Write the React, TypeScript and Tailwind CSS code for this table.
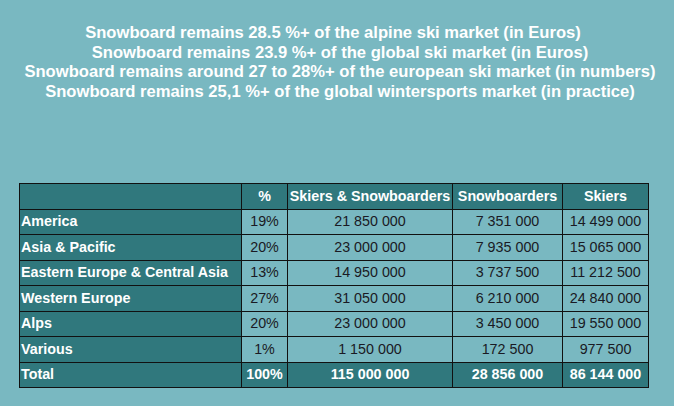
const lines = [
  "Snowboard remains 28.5 %+ of the alpine ski market (in Euros)",
  "Snowboard remains 23.9 %+ of the global ski market (in Euros)",
  "Snowboard remains around 27 to 28%+ of the european ski market (in numbers)",
  "Snowboard remains 25,1 %+ of the global wintersports market (in practice)",
];

const rows = [
  ["America", "19%", "21 850 000", "7 351 000", "14 499 000"],
  ["Asia & Pacific", "20%", "23 000 000", "7 935 000", "15 065 000"],
  ["Eastern Europe & Central Asia", "13%", "14 950 000", "3 737 500", "11 212 500"],
  ["Western Europe", "27%", "31 050 000", "6 210 000", "24 840 000"],
  ["Alps", "20%", "23 000 000", "3 450 000", "19 550 000"],
  ["Various", "1%", "1 150 000", "172 500", "977 500"],
];

const App = () => {
  return (
    <div
      className="w-[674px] h-[406px] bg-[#79b8c1] flex flex-col items-center pt-[23px]"
      style={{ fontFamily: '"Liberation Sans", Arial, sans-serif' }}
    >
      <div className="ml-[6px] text-white font-bold text-[16.6px] leading-[19.5px] text-center whitespace-nowrap">
        <div className="mr-[14px]">{lines[0]}</div>
        {lines.slice(1).map((l) => (
          <div key={l}>{l}</div>
        ))}
      </div>

      <table className="mt-[82px] ml-[-6px] border-collapse border border-[#111] text-[14.3px] table-fixed w-[629px]">
        <colgroup>
          <col className="w-[222px]" />
          <col className="w-[46px]" />
          <col className="w-[165px]" />
          <col className="w-[110px]" />
          <col className="w-[86px]" />
        </colgroup>
        <thead>
          <tr className="h-[25.5px] bg-[#30787d] text-white font-bold">
            <th className="border border-[#111]"></th>
            <th className="border border-[#111] text-center">%</th>
            <th className="border border-[#111] text-center whitespace-nowrap">Skiers &amp; Snowboarders</th>
            <th className="border border-[#111] text-center">Snowboarders</th>
            <th className="border border-[#111] text-center">Skiers</th>
          </tr>
        </thead>
        <tbody>
          {rows.map((r) => (
            <tr key={r[0]} className="h-[25.5px]">
              <td className="border border-[#111] bg-[#30787d] text-white font-bold text-left pl-[1px] whitespace-nowrap">
                {r[0]}
              </td>
              {r.slice(1).map((v, i) => (
                <td key={i} className="border border-[#111] text-center text-[#1a1a24]">
                  {v}
                </td>
              ))}
            </tr>
          ))}
          <tr className="h-[25.5px] bg-[#30787d] text-white font-bold">
            <td className="border border-[#111] text-left pl-[1px]">Total</td>
            <td className="border border-[#111] text-center">100%</td>
            <td className="border border-[#111] text-center whitespace-nowrap">115 000 000</td>
            <td className="border border-[#111] text-center">28 856 000</td>
            <td className="border border-[#111] text-center whitespace-nowrap">86 144 000</td>
          </tr>
        </tbody>
      </table>
    </div>
  );
};

export default App;
